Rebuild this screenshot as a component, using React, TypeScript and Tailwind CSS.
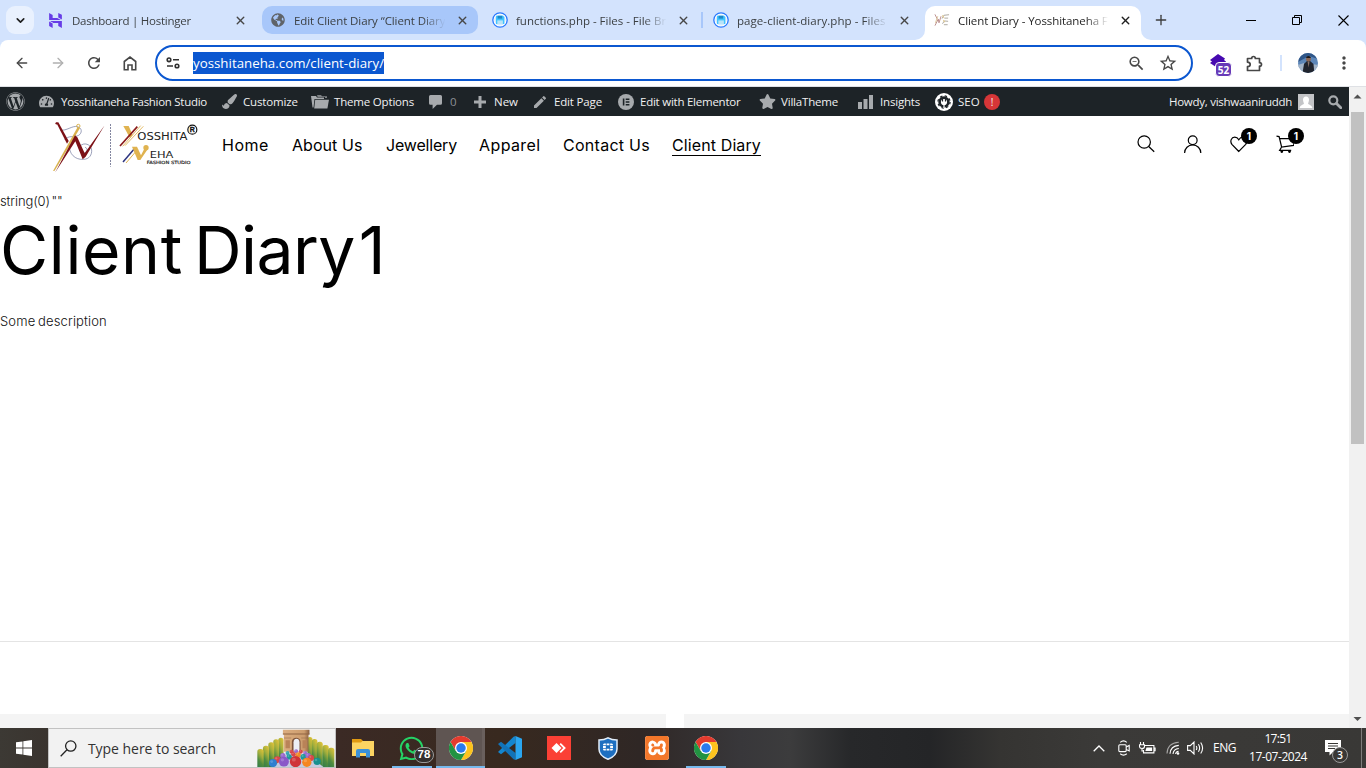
import React from "react";
import { ArrowLeft, ArrowRight, ChevronDown, Plus, X } from "lucide-react";
import { FaGlobeAmericas, FaPaintBrush, FaStar, FaTachometerAlt, FaWhatsapp, FaWordpress } from "react-icons/fa";
import { MdEdit, MdMoreVert, MdRefresh, MdStarBorder, MdZoomOut } from "react-icons/md";
import { SiFortinet, SiHostinger, SiXampp } from "react-icons/si";

const ui = "font-['Open_Sans','Noto_Sans',sans-serif]";

/* ---------- Browser tabs ---------- */

function FileBrowserIcon() {
  return (
    <svg width="16" height="16" viewBox="0 0 16 16">
      <circle cx="8" cy="8" r="7.2" fill="#fff" stroke="#2979ff" strokeWidth="1.3" />
      <circle cx="8" cy="8" r="5.6" fill="#d8ecfa" />
      <path d="M4 3.800h7l1.300 1.300v7H4z" fill="#40c4ff" />
      <path d="M5.600 3.800h4.600v2.800H5.600z" fill="#1e88c7" />
      <path d="M5.300 8.400h5.600v3.700H5.300z" fill="#b9e3f8" />
    </svg>
  );
}

function StudioIcon() {
  return (
    <svg width="17" height="14" viewBox="0 0 17 14" fill="none">
      <path d="M1 1l2.500 5M1 13l3.500-7 .8 4L7.500 3" stroke="#b98b8b" strokeWidth="1" />
      <path d="M1.500 10L4 3" stroke="#dcc79a" strokeWidth="1" />
      <path d="M8.500 5.500l2-3.500 5.500-.6M9 11l2-3 4 .4M10.500 12h4M11 5h4" stroke="#aaa59d" strokeWidth="1" />
      <path d="M9 2l1.500 2.500M10 7l1.500 2.500" stroke="#e3c98b" strokeWidth="1.100" />
    </svg>
  );
}

type TabProps = {
  icon: React.ReactNode;
  title: string;
  titleBox: string;
  kind?: "plain" | "grouped" | "active";
  divider?: boolean;
};

function Tab({ icon, title, titleBox, kind = "plain", divider }: TabProps) {
  const shape =
    kind === "active"
      ? "h-[34px] self-end rounded-t-[10px] bg-white text-[#1f1f1f] pb-[6px]"
      : kind === "grouped"
        ? "h-7 rounded-[10px] bg-[#a8c7fa] text-[#3c4043]"
        : "h-7 text-[#3c4043]";
  return (
    <>
      <div className={`relative flex w-[216px] shrink-0 items-center pl-[9px] ${shape}`}>
        {kind === "active" && (
          <>
            <span className="absolute bottom-0 -left-[10px] h-[10px] w-[10px] bg-white">
              <span className="block h-full w-full rounded-br-[10px] bg-[#d3e3fd]" />
            </span>
            <span className="absolute -right-[10px] bottom-0 h-[10px] w-[10px] bg-white">
              <span className="block h-full w-full rounded-bl-[10px] bg-[#d3e3fd]" />
            </span>
          </>
        )}
        <span className="flex w-4 shrink-0">{icon}</span>
        <span
          className={`overflow-hidden pt-px text-[11.5px] whitespace-nowrap [mask-image:linear-gradient(to_right,#000_84%,transparent_99%)] ${titleBox}`}
        >
          {title}
        </span>
        <span className="ml-[7px] flex w-4 shrink-0 justify-center">
          <X size={13} strokeWidth={2.6} className={kind === "active" ? "text-[#1f1f1f]" : "text-[#474747]"} />
        </span>
      </div>
      <span className="flex w-[5px] shrink-0 justify-center">{divider && <span className="h-4 w-[2px] bg-[#a8c7fa]" />}</span>
    </>
  );
}

function TabStrip() {
  return (
    <div className="flex h-10 shrink-0 items-center bg-[#d3e3fd]">
      <button className="ml-[6px] flex h-7 w-7 shrink-0 items-center justify-center rounded-[9px] bg-[#e9f1fe]">
        <ChevronDown size={13} strokeWidth={3} className="text-[#1f1f1f]" />
      </button>
      <span className="w-[7px] shrink-0" />
      <Tab icon={<SiHostinger size={15} className="-ml-[2px] text-[#673de6]" />} title="Dashboard | Hostinger" titleBox="ml-[6px] w-[153px] tracking-[-0.24px]" />
      <Tab kind="grouped" icon={<FaGlobeAmericas size={14} className="text-[#5f6368]" />} title="Edit Client Diary “Client Diary 1”" titleBox="ml-[7px] w-[153px] tracking-[-0.08px]" />
      <Tab icon={<FileBrowserIcon />} title="functions.php - Files - File Browser" titleBox="ml-[8px] w-[152px] tracking-[-0.01px]" divider />
      <Tab icon={<FileBrowserIcon />} title="page-client-diary.php - Files - File Browser" titleBox="ml-[8px] w-[152px] tracking-[0.06px]" />
      <Tab kind="active" icon={<StudioIcon />} title="Client Diary - Yosshitaneha Fashion" titleBox="ml-[8px] w-[152px] tracking-[-0.08px]" />
      <Plus size={16} strokeWidth={2} className="ml-[7px] shrink-0 text-[#3c3c3c]" />
      <div className="ml-auto flex h-full items-center">
        <span className="flex w-[46px] justify-center">
          <span className="h-px w-[10px] bg-black" />
        </span>
        <span className="flex w-[46px] justify-center">
          <svg width="10" height="10" viewBox="0 0 10 10" fill="none" stroke="#000">
            <path d="M.5 2.500h7v7h-7zM2.500 2.500v-2h7v7h-2" />
          </svg>
        </span>
        <span className="flex w-[46px] justify-center">
          <svg width="11" height="11" viewBox="0 0 11 11" stroke="#000" strokeWidth="1.100">
            <path d="M.5.5l10 10M10.500.5l-10 10" />
          </svg>
        </span>
      </div>
    </div>
  );
}

/* ---------- Address bar ---------- */

function Toolbar() {
  return (
    <div className="shrink-0 bg-[#d3e3fd]">
      <div className="flex h-[47px] items-center rounded-t-[8px] border-b border-[#dfe1e5] bg-white pl-1 text-[#474747]">
        <span className="flex w-9 shrink-0 justify-center"><ArrowLeft size={16} strokeWidth={2} /></span>
        <span className="flex w-9 shrink-0 justify-center text-[#b0b0b0]"><ArrowRight size={16} strokeWidth={2} /></span>
        <span className="flex w-9 shrink-0 justify-center"><MdRefresh size={18} /></span>
        <span className="flex w-9 shrink-0 justify-center">
          <svg width="14" height="15" viewBox="0 0 14 15" fill="none" stroke="currentColor" strokeWidth="1.600">
            <path d="M1.300 5.500L7 1.100l5.700 4.400v8.200H9V9H5v4.700H1.300z" />
          </svg>
        </span>
        <div className="ml-[7px] flex h-9 w-[1038px] shrink-0 items-center rounded-full border-2 border-[#0b57d0] pl-[9px]">
          <svg width="14" height="12" viewBox="0 0 14 12" fill="none" stroke="#303030" strokeWidth="1.600">
            <circle cx="3" cy="2.800" r="1.800" />
            <path d="M7 2.800h6M1 9h6" />
            <circle cx="11" cy="9" r="1.800" />
          </svg>
          <span className={`ml-[13px] h-[22px] w-[191px] bg-[#0b57d0] text-[13.3px] leading-[22px] tracking-[0.01px] whitespace-nowrap text-white ${ui}`}>
            yosshitaneha.com/client-diary/
          </span>
          <MdZoomOut size={19} className="ml-[743px] shrink-0" />
          <MdStarBorder size={20} className="ml-3 shrink-0" />
        </div>
        <div className="relative ml-4 flex h-[26px] w-6 shrink-0 items-start">
          <svg width="18" height="17" viewBox="0 0 18 17" className="mt-[4px]">
            <path d="M9 0l7 4.500-1 1.500 2 1.500-4 5.500H7L1 9l2-1.500L1 6z" fill="#4609b0" />
          </svg>
          <span className="absolute top-[12px] left-[6px] flex h-[15px] w-[17px] items-center justify-center rounded-[4px] border border-white bg-[#673ab7] font-['Open_Sans',sans-serif] text-[10px] leading-none font-bold text-white">
            52
          </span>
        </div>
        <svg width="17" height="17" viewBox="0 0 17 17" fill="none" stroke="currentColor" strokeWidth="1.700" strokeLinejoin="round" className="ml-[13px] shrink-0">
          <path d="M1.500 3.500h4.200q0-2 1.800-2t1.800 2h4.200v4.200q2 0 2 1.700t-2 1.700v4.400h-12v-3.800q2.700-.3 2.700-2.300T1.500 7.200z" />
        </svg>
        <span className="ml-[17px] h-4 w-[2px] shrink-0 bg-[#d3e3fd]" />
        <svg width="20" height="20" viewBox="0 0 20 20" className="ml-[16px] shrink-0">
          <clipPath id="avatar"><circle cx="10" cy="10" r="10" /></clipPath>
          <g clipPath="url(#avatar)">
            <path d="M0 0h20v20H0z" fill="#5d86b8" />
            <path d="M0 0h20v6L11 3 0 9z" fill="#2f5688" />
            <path d="M0 12l6-2v10H0zM14 11l6 1v8h-6z" fill="#a3b4c8" />
            <path d="M4.500 20l1.500-9L9 8h3l3.500 3 .8 9z" fill="#20242e" />
            <circle cx="10.500" cy="6" r="2.500" fill="#8a6655" />
            <path d="M8 5a2.600 2.600 0 0 1 5 0z" fill="#1b1718" />
            <path d="M9.500 8.500h2l-.8 6z" fill="#8b756c" />
          </g>
        </svg>
        <MdMoreVert size={20} className="ml-[16px] shrink-0" />
      </div>
    </div>
  );
}

/* ---------- WordPress admin bar ---------- */

function AdminItem({ icon, iconBox, label, labelBox }: { icon: React.ReactNode; iconBox: string; label: string; labelBox: string }) {
  return (
    <div className="flex shrink-0 items-center">
      <span className={`flex shrink-0 items-center text-[#a7aaad] ${iconBox}`}>{icon}</span>
      <span className={`whitespace-nowrap ${labelBox}`}>{label}</span>
    </div>
  );
}

function AdminBar() {
  return (
    <div className={`flex h-[29px] shrink-0 items-center bg-[#1d2327] text-[11.5px] text-[#f0f0f1] ${ui}`}>
      <FaWordpress size={19} className="ml-[6px] shrink-0 text-[#a7aaad]" />
      <AdminItem icon={<FaTachometerAlt size={15} />} iconBox="ml-[14px] w-[22px]" label="Yosshitaneha Fashion Studio" labelBox="w-[161px] tracking-[-0.29px]" />
      <AdminItem icon={<FaPaintBrush size={15} />} iconBox="w-[21px]" label="Customize" labelBox="w-[68px] tracking-[-0.14px]" />
      <AdminItem
        icon={
          <svg width="18" height="14" viewBox="0 0 18 14" fill="currentColor">
            <path d="M0 1h5l1 1.500h7V4H3.500L2.500 12.500H1.500z" />
            <path d="M6 0h4l1 1.200h5V3h-2V1.900H6.600z" opacity=".7" />
            <path d="M4.200 4.800H18l-1.600 8.700H3.200z" />
          </svg>
        }
        iconBox="w-[23px]"
        label="Theme Options"
        labelBox="w-[95px] tracking-[-0.18px]"
      />
      <AdminItem
        icon={
          <svg width="13" height="14" viewBox="0 0 13 14" fill="currentColor">
            <path d="M1.500 0h10A1.500 1.500 0 0 1 13 1.500v6.700a1.500 1.500 0 0 1-1.500 1.500H8L3.600 14V9.700H1.500A1.500 1.500 0 0 1 0 8.200V1.500A1.500 1.500 0 0 1 1.500 0z" />
          </svg>
        }
        iconBox="w-[21px]"
        label="0"
        labelBox="w-6 text-[#8c9095]"
      />
      <AdminItem
        icon={
          <svg width="12" height="12" viewBox="0 0 12 12" fill="currentColor">
            <path d="M4.500 0h3v4.500H12v3H7.500V12h-3V7.500H0v-3h4.500z" />
          </svg>
        }
        iconBox="w-5"
        label="New"
        labelBox="w-[38px]"
      />
      <AdminItem icon={<MdEdit size={16} />} iconBox="w-[22px]" label="Edit Page" labelBox="w-16 tracking-[-0.16px]" />
      <AdminItem
        icon={
          <svg width="16" height="16" viewBox="0 0 16 16">
            <circle cx="8" cy="8" r="8" fill="#a7aaad" />
            <path d="M4.800 4.500h1.600v7H4.800zM7.700 4.500h3.700V6H7.700zM7.700 7.250h3.700v1.500H7.700zM7.700 10h3.700v1.500H7.700z" fill="#1d2327" />
          </svg>
        }
        iconBox="w-[22px]"
        label="Edit with Elementor"
        labelBox="w-[119px] tracking-[-0.24px]"
      />
      <AdminItem icon={<FaStar size={17} />} iconBox="w-[22px]" label="VillaTheme" labelBox="w-[77px] tracking-[-0.19px]" />
      <AdminItem
        icon={
          <svg width="15" height="14" viewBox="0 0 15 14" fill="currentColor">
            <path d="M0 7h4v7H0zM5.500 4h4v10h-4zM11 0h4v14h-4z" />
          </svg>
        }
        iconBox="w-[22px]"
        label="Insights"
        labelBox="w-[55px] tracking-[-0.18px]"
      />
      <AdminItem
        icon={
          <svg width="18" height="18" viewBox="0 0 18 18">
            <circle cx="9" cy="9" r="9" fill="#fff" />
            <circle cx="9" cy="9" r="4.400" fill="none" stroke="#1d2327" strokeWidth="2.600" />
            <circle cx="9" cy="9" r="6.100" fill="none" stroke="#1d2327" strokeWidth="1.200" strokeDasharray="2.400 2.390" />
            <path d="M7.500 5.500v3M10.500 5.500v3" stroke="#1d2327" strokeWidth="1.200" />
            <path d="M8.400 11h1.200v4H8.400z" fill="#fff" />
          </svg>
        }
        iconBox="w-[23px]"
        label="SEO"
        labelBox="w-[26px]"
      />
      <span className="flex h-4 w-4 shrink-0 items-center justify-center rounded-full bg-[#d63638] text-[10px] leading-none">!</span>
      <span className="ml-auto w-[129px] shrink-0 tracking-[-0.27px] whitespace-nowrap">Howdy, vishwaaniruddh</span>
      <svg width="16" height="16" viewBox="0 0 16 16" className="shrink-0">
        <path d="M0 0h16v16H0z" fill="#c3c4c7" />
        <path d="M8 2.500c2 0 3 1.500 3 3.300S10 9.500 10 9.500c0 1 3.800 1.300 4.400 4.500H1.600C2.200 10.800 6 10.500 6 9.500c0 0-1-1.900-1-3.700S6 2.500 8 2.500z" fill="#fff" />
      </svg>
      <svg width="14" height="14" viewBox="0 0 14 14" className="mr-[7px] ml-[14px] shrink-0" fill="none" stroke="#a7aaad">
        <circle cx="5.300" cy="5.300" r="4" strokeWidth="2.200" />
        <path d="M8.500 8.500l4.300 4.300" strokeWidth="2.800" strokeLinecap="round" />
      </svg>
    </div>
  );
}

/* ---------- Site ---------- */

function Logo() {
  return (
    <svg width="170" height="62" viewBox="0 6 510 186" fill="none" className="shrink-0">
      <g stroke="#6b7298" strokeWidth="2">
        <path d="M60 48c20 4 36-14 52-10s14 20 4 26c-16 8-30-2-42 14" />
        <path d="M88 92c-2 28 18 46 42 44 18 0 26-14 25-28-2-18-24-24-34-12-8 12 2 24 14 20 8-4 8-14 0-16" />
      </g>
      <path d="M39 171l74-132 7 3-76 128z" fill="#d9b24f" />
      <circle cx="115" cy="36" r="5" stroke="#d9b24f" strokeWidth="3" />
      <path d="M49 26l6-1 31 56-5 8z" fill="#7c1116" />
      <path d="M45 176l60-112 7 6 22 48 60-84-57 94-9 8-22-54z" fill="#7c1116" />
      <circle cx="50" cy="28" r="3.500" fill="#7c1116" />
      <path d="M211.500 30v128" stroke="#444870" strokeWidth="2" strokeDasharray="6 3" />
      <path d="M250 36h16l12 27-8 9z" fill="#e0b350" />
      <path d="M240 96l52-58" stroke="#8a1a1a" strokeWidth="5" />
      <path d="M248 97l54-62M255 95l55-58" stroke="#dfb04b" strokeWidth="2.500" />
      <path d="M249 144l36-42" stroke="#2c3480" strokeWidth="4.500" />
      <path d="M258 147l36-42" stroke="#e0b350" strokeWidth="3" />
      <path d="M276 98h15l12 26 10-20 10 2-22 32h-8z" fill="#e0b350" />
      <circle cx="318" cy="101" r="8" fill="#e0b350" />
      <text x="292" y="77" fontSize="29" fill="#222" textLength="150" lengthAdjust="spacingAndGlyphs" fontFamily="DejaVu Sans, sans-serif">OSSHITA</text>
      <circle cx="457" cy="47" r="13.500" stroke="#111" strokeWidth="3.500" />
      <text x="449.500" y="55" fontSize="21" fill="#111" stroke="#111" fontWeight="bold" fontFamily="Liberation Sans, sans-serif">R</text>
      <text x="329" y="132" fontSize="28" fill="#222" textLength="71" lengthAdjust="spacingAndGlyphs" fontFamily="DejaVu Sans, sans-serif">EHA</text>
      <text x="320" y="150" fontSize="13" fill="#222" stroke="#222" strokeWidth=".5" textLength="132" lengthAdjust="spacingAndGlyphs" fontFamily="DejaVu Sans, sans-serif">FASHION STUDIO</text>
    </svg>
  );
}

function CountBadge() {
  return (
    <span className="absolute -top-[7px] left-[10px] flex h-4 w-4 items-center justify-center rounded-full bg-black font-['Inter',sans-serif] text-[10px] leading-none font-bold text-white">
      1
    </span>
  );
}

function SiteHeader() {
  return (
    <header className="flex h-[62px] shrink-0 items-start pl-10">
      <Logo />
      <nav className="mt-[19px] flex text-[16px] leading-[20px] whitespace-nowrap text-black">
        <a className="ml-[12px] w-[70px] tracking-[0.54px]">Home</a>
        <a className="w-[94px] tracking-[0.05px]">About Us</a>
        <a className="w-[93px] tracking-[-0.18px]">Jewellery</a>
        <a className="w-[84px] tracking-[0.4px]">Apparel</a>
        <a className="w-[109px] tracking-[0.27px]">Contact Us</a>
        <a className="w-[89px] border-b border-black tracking-[0.11px]">Client Diary</a>
      </nav>
      <div className="mt-[19px] mr-[53px] ml-auto flex gap-[29px]">
        <svg width="18" height="18" viewBox="0 0 18 18" fill="none" stroke="#000" strokeWidth="1.200">
          <circle cx="7.200" cy="7" r="6.200" />
          <path d="M11.700 11.500l5.500 5.300" />
        </svg>
        <svg width="18" height="18" viewBox="0 0 18 18" fill="none" stroke="#000" strokeWidth="1.200">
          <circle cx="8.700" cy="5.300" r="4.400" />
          <path d="M.6 18a8.100 8.100 0 0 1 16.200 0" />
        </svg>
        <span className="relative h-[18px] w-[18px]">
          <svg width="18" height="18" viewBox="0 0 18 18" fill="none" stroke="#000" strokeWidth="1.200" className="-ml-px">
            <path d="M8.800 16.500L1.900 9.300C-.3 6.300 1.300 2.200 4.700 2.200c2 0 3.300 1.200 4.100 2.600.8-1.400 2.100-2.600 4.100-2.600 3.400 0 5 4.100 2.800 7.100z" />
          </svg>
          <CountBadge />
        </span>
        <span className="relative h-[18px] w-[18px]">
          <svg width="18" height="18" viewBox="0 0 18 18" fill="none" stroke="#000" strokeWidth="1.200" className="-ml-[2px]">
            <path d="M.5 1.200l2.600.4L5.600 12l12-1.600 1.400-6.700H3.600M5.600 12l-2 3.400h11.600" />
            <circle cx="5.800" cy="16.600" r=".8" fill="#000" />
            <circle cx="13.500" cy="16.600" r=".8" fill="#000" />
          </svg>
          <CountBadge />
        </span>
      </div>
    </header>
  );
}

function Page() {
  return (
    <div className="flex min-h-0 flex-1 flex-col overflow-hidden bg-white font-['Inter',sans-serif]">
      <AdminBar />
      <SiteHeader />
      <p className="mt-[13px] h-5 shrink-0 text-[13px] leading-5 font-light tracking-[-0.12px] text-[#111] [word-spacing:-2px]">string(0) ""</p>
      <h1 className="h-[78px] shrink-0 text-[66px] leading-[78px] tracking-[-1.42px] text-black [word-spacing:-6px]">
        <span className="tracking-[0.6px]">Client</span> <span className="tracking-[-0.6px]">Diary</span><span className="[word-spacing:-13px]"> 1</span>
      </h1>
      <p className="mt-[22px] h-5 shrink-0 text-[13px] leading-5 font-light tracking-[0.13px] text-[#111] [word-spacing:-1px]">Some description</p>
      <hr className="mt-[310px] shrink-0 border-[#e4e4e4]" />
      <div className="mt-[72px] flex h-[14px] shrink-0 gap-[18px]">
        <span className="w-[666px] bg-[#f4f4f4]" />
        <span className="flex-1 bg-[#f4f4f4]" />
      </div>
    </div>
  );
}

function Scrollbar() {
  return (
    <div className="flex w-[17px] shrink-0 flex-col items-center bg-[#f1f1f1]">
      <svg width="17" height="25" viewBox="0 0 17 25"><path d="M4.500 11.500l4-4 4 4z" fill="#505050" /></svg>
      <span className="h-[332px] w-[13px] bg-[#c1c1c1]" />
      <svg width="17" height="17" viewBox="0 0 17 17" className="mt-auto"><path d="M4.500 6l4 4 4-4z" fill="#505050" /></svg>
    </div>
  );
}

/* ---------- Taskbar ---------- */

function ChromeIcon() {
  return (
    <svg width="24" height="24" viewBox="0 0 48 48">
      <circle cx="24" cy="24" r="24" fill="#fff" />
      <path d="M24 12h20.800A24 24 0 0 0 3.200 12l10.400 18z" fill="#e33b2e" />
      <path d="M34.400 30L24 48A24 24 0 0 0 44.800 12H24z" fill="#fcc31e" />
      <path d="M13.600 30L3.200 12A24 24 0 0 0 24 48l10.400-18z" fill="#229342" />
      <circle cx="24" cy="24" r="12" fill="#fff" />
      <circle cx="24" cy="24" r="9.500" fill="#2a7bee" />
    </svg>
  );
}

const hedges: [number, number, number][] = [
  [64, 16, 26], [49, 17, 31], [34, 18, 40], [18, 18, 50], [1, 19, 60],
  [152, 15, 24], [165, 17, 30], [180, 18, 38], [197, 19, 48], [214, 19, 56],
];

const balls: [number, number, number, string][] = [
  [92, 72, 6, "#35a3b4"], [104, 68, 6, "#d9474a"], [118, 67, 6, "#9a6bd0"], [132, 68, 6, "#d9474a"], [145, 72, 6, "#9a6bd0"],
  [78, 80, 8, "#9a6bd0"], [97, 84, 8, "#1f9a9a"], [110, 76, 7, "#d9474a"], [124, 78, 8, "#f08a2a"], [140, 84, 9, "#1f9a9a"], [154, 80, 8, "#9a6bd0"],
  [61, 92, 10, "#d9474a"], [163, 87, 9, "#d9474a"], [48, 102, 12, "#2f7fd0"], [81, 98, 15, "#8a58c8"], [116, 98, 17, "#cf3338"], [150, 100, 14, "#f5861f"], [181, 97, 11, "#17908e"],
];

function SearchArt() {
  return (
    <svg width="78" height="38" viewBox="0 0 234 114" className="self-end">
      <defs>
        <linearGradient id="hedge" x1=".7" y1="0" x2=".3" y2="1">
          <stop offset="0" stopColor="#d8c03a" /><stop offset=".3" stopColor="#a3ae3c" /><stop offset=".6" stopColor="#4f8c40" /><stop offset="1" stopColor="#2f7a4a" />
        </linearGradient>
        <linearGradient id="stone" x1="0" y1="0" x2="1" y2="0">
          <stop offset="0" stopColor="#dcae80" /><stop offset=".8" stopColor="#cc9c6d" /><stop offset="1" stopColor="#8a5f40" />
        </linearGradient>
      </defs>
      {hedges.map(([x, w, y]) => (
        <rect key={x} x={x} y={y} width={w} height={124 - y} rx="8" fill="url(#hedge)" />
      ))}
      <path d="M50 114l40-40h60l50 40z" fill="#c5cbe0" />
      <path d="M78 2h80v14h-3v52H81V16h-3z" fill="url(#stone)" />
      <path d="M78 13h80v3H78zM81 26h22v2H81zM133 26h22v2h-22z" fill="#8f6443" />
      <path d="M86 34h13v24H86zM137 34h13v24h-13z" fill="#b98358" />
      <path d="M105 68V38c0-16 26-16 26 0v30z" fill="#7b533a" />
      <path d="M110 68V40c0-14 18-14 18 0v28z" fill="#eceff4" />
      {balls.map(([cx, cy, r, fill]) => (
        <g key={`${cx}-${cy}`}>
          <circle cx={cx} cy={cy} r={r} fill={fill} />
          <circle cx={cx - r * 0.3} cy={cy - r * 0.35} r={r * 0.35} fill="#fff" opacity=".2" />
        </g>
      ))}
    </svg>
  );
}

function TaskIcon({ children, state = "idle" }: { children: React.ReactNode; state?: "idle" | "open" | "focused" }) {
  return (
    <span className={`relative flex h-10 w-[49px] shrink-0 items-center justify-center ${state === "focused" ? "border-r-[3px] border-[#6a605d] bg-[#5f5552] pl-[3px]" : ""}`}>
      {children}
      {state === "open" && <span className="absolute bottom-0 left-[5px] h-[2px] w-10 bg-[#76b9ed]" />}
      {state === "focused" && <span className="absolute bottom-0 left-0 h-[2px] w-[49px] bg-[#76b9ed]" />}
    </span>
  );
}

function Taskbar() {
  return (
    <div
      className={`flex h-10 shrink-0 items-center bg-[linear-gradient(to_right,#3c3934_0px,#3a342f_48px,#3b2a25_336px,#38291f_500px,#2f2725_640px,#38373a_740px,#3c3c3d_790px,#27282a_850px,#242527_930px,#353432_1000px,#3b3a38_1100px,#393836_1366px)] text-white ${ui}`}
    >
      <span className="flex w-12 shrink-0 justify-center">
        <svg width="16" height="16" viewBox="0 0 16 16" fill="#fff">
          <path d="M0 2.300l6.500-.9v6.200H0zM7.300 1.300L16 0v7.600H7.300zM0 8.400h6.500v6.200L0 13.700zM7.300 8.400H16V16l-8.700-1.200z" />
        </svg>
      </span>
      <div className="flex h-10 w-[288px] shrink-0 items-center border border-[#c2c2c2] bg-[#f2f2f2] pl-[11px] text-[#333]">
        <svg width="17" height="17" viewBox="0 0 17 17" fill="none" stroke="#222" strokeWidth="1.300">
          <circle cx="10.800" cy="6" r="5.200" />
          <path d="M7 9.800L.7 16.200" />
        </svg>
        <span className="ml-[11px] w-[170px] text-[14px] tracking-[-0.04px] whitespace-nowrap">Type here to search</span>
        <SearchArt />
      </div>
      <span className="w-[2px] shrink-0" />
      <TaskIcon>
        <svg width="22" height="19" viewBox="0 0 22 19">
          <path d="M0 0h9l2 2v4H0z" fill="#e09a12" />
          <path d="M0 3.500h9L10.500 2H22v15H0z" fill="#fcd462" />
          <path d="M4 18.500V12q0-2 2-2h10q2 0 2 2v6.500h-4V14H8v4.500z" fill="#3b91d8" />
        </svg>
      </TaskIcon>
      <TaskIcon state="open">
        <FaWhatsapp size={27} className="text-[#25d366]" />
        <span className="absolute top-[19px] left-[27px] flex h-4 w-[20px] items-center justify-center rounded-full border border-[#9a9a9a] bg-[#34302e] font-['Liberation_Sans',sans-serif] text-[11.5px] leading-none font-bold text-white">
          78
        </span>
      </TaskIcon>
      <TaskIcon state="focused"><ChromeIcon /></TaskIcon>
      <TaskIcon>
        <svg width="24" height="24" viewBox="0 0 24 24">
          <path d="M17.500 0v7L3 18.300l-3-2.200L15.500.8z" fill="#1486cf" />
          <path d="M17.500 24v-7L3 5.700 0 7.900l15.500 15.300z" fill="#1273b8" />
          <path d="M17.500 0L24 2.800v18.400L17.500 24z" fill="#2aa6f0" />
        </svg>
      </TaskIcon>
      <TaskIcon>
        <svg width="24" height="24" viewBox="0 0 24 24">
          <path d="M0 0h24v24H0z" fill="#fb4035" />
          <path d="M9.500 7l5 5-5 5-5-5z" fill="#fff" />
          <path d="M13.200 7.600l4.400 4.400-4.400 4.400" fill="none" stroke="#fff" strokeWidth="1.800" />
        </svg>
      </TaskIcon>
      <TaskIcon>
        <span className="relative flex items-center justify-center">
          <svg width="20" height="23" viewBox="0 0 20 23">
            <path d="M10 .8c3 1.800 6 2.200 9 2.200v9c0 5-4 8.300-9 10.200C5 20.300 1 17 1 12V3c3 0 6-.4 9-2.200z" fill="#1e6fc0" stroke="#e3eefa" strokeWidth="1.500" />
          </svg>
          <SiFortinet size={10} className="absolute top-[5px] text-white" />
        </span>
      </TaskIcon>
      <TaskIcon>
        <span className="flex rounded-[3px] bg-white"><SiXampp size={24} className="text-[#f3772a]" /></span>
      </TaskIcon>
      <TaskIcon state="open"><ChromeIcon /></TaskIcon>

      <div className="ml-auto flex h-10 items-center">
        <svg width="12" height="7" viewBox="0 0 12 7" fill="none" stroke="#fff" strokeWidth="1.300"><path d="M.7 6.200L6 1l5.300 5.200" /></svg>
        <svg width="12" height="16" viewBox="0 0 12 16" fill="none" stroke="#fff" strokeWidth="1.100" className="ml-[13px]">
          <rect x=".8" y="4.800" width="7.400" height="6.800" rx="1" />
          <path d="M8.200 7l3-1.500v5.400l-3-1.500M2.200 2.300Q5.500-.6 8.800 2.300M2.200 13.800q3.300 2.700 6.600 0" />
        </svg>
        <svg width="17" height="13" viewBox="0 0 17 13" fill="none" stroke="#fff" strokeWidth="1.100" className="ml-[9px]">
          <path d="M5.500 3.500h9.400v7.400H4.500V8M14.900 6h1.200v2.700h-1.200" />
          <path d="M7.500 5.500h5.600v3.600H6.400z" fill="#fff" stroke="none" />
          <path d="M1.500 0v2.500M4.500 0v2.500M.5 2.800h5v1.700q0 2-2.500 2t-2.500-2zM3 6.500V9h2" />
        </svg>
        <svg width="14" height="14" viewBox="0 0 14 14" fill="none" stroke="#fff" strokeWidth="1.100" className="ml-[10px]">
          <path d="M1 12.500Q1.500 2 12.800 1.300" opacity=".55" />
          <path d="M4 12.800Q4.500 5 12.800 4.400M7 13Q7.500 8 12.800 7.500" />
          <path d="M9.600 13q.3-2.300 3-2.700" />
          <circle cx="12" cy="12.500" r="1.300" fill="#fff" stroke="none" />
        </svg>
        <svg width="17" height="14" viewBox="0 0 17 14" fill="none" stroke="#fff" strokeWidth="1.100" className="ml-[7px]">
          <path d="M.6 4.600h2.700L7 1v12L3.300 9.400H.6zM9.200 5q1.300 2 0 4M11.400 3.200q2.500 3.800 0 7.600M13.700 1.500q3.800 5.500 0 11" />
        </svg>
        <span className="ml-[9px] w-[24px] text-[12px] tracking-[-0.48px]">ENG</span>
        <span className="ml-[12px] flex w-[58px] flex-col items-center text-[12px] leading-[18px] whitespace-nowrap">
          <span className="tracking-[-0.7px]">17:51</span>
          <span className="tracking-[-0.46px]">17-07-2024</span>
        </span>
        <span className="relative ml-[18px] flex h-10 w-6">
          <svg width="16" height="16" viewBox="0 0 16 16" className="mt-[12px]">
            <path d="M0 0h16v12H8l-3.500 3.500V12H0z" fill="#fff" />
            <path d="M3 3.500h10M3 6h10M3 8.500h7" stroke="#393836" />
          </svg>
          <span className="absolute top-[19px] left-[7px] flex h-4 w-4 items-center justify-center rounded-full border border-[#9a9a9a] bg-[#393836] text-[10.5px] leading-none font-semibold">
            3
          </span>
        </span>
        <span className="ml-[12px] h-10 w-px bg-[#7d7c7b]" />
        <span className="w-1" />
      </div>
    </div>
  );
}

export default function App() {
  return (
    <div className={`flex h-[768px] w-[1366px] flex-col overflow-hidden bg-white ${ui}`}>
      <TabStrip />
      <Toolbar />
      <main className="flex min-h-0 flex-1">
        <Page />
        <Scrollbar />
      </main>
      <Taskbar />
    </div>
  );
}
